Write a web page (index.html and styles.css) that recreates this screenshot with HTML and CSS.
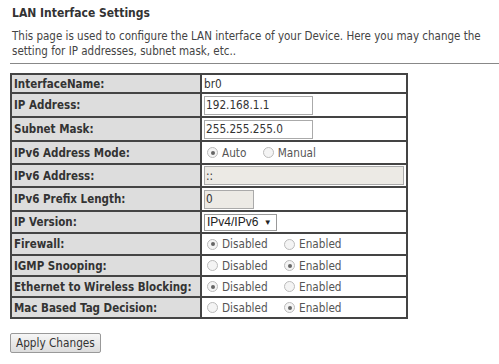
FILE: index.html
```html
<!DOCTYPE html>
<html lang="en">
<head>
    <meta charset="UTF-8">
    <title>LAN Interface Settings</title>
    <link rel="stylesheet" href="styles.css">
</head>
<body>

<div class="intro">
    <h2 class="page-title">LAN Interface Settings</h2>
    <p class="page-desc">This page is used to configure the LAN interface of your Device. Here you may change the setting for IP addresses, subnet mask, etc..</p>
    <hr>
</div>

<form>
<table class="settings">
    <tr class="r19">
        <th>InterfaceName:</th>
        <td>br0</td>
    </tr>
    <tr class="r24">
        <th>IP Address:</th>
        <td><input type="text" class="field" value="192.168.1.1"></td>
    </tr>
    <tr class="r24">
        <th>Subnet Mask:</th>
        <td><input type="text" class="field" value="255.255.255.0"></td>
    </tr>
    <tr>
        <th>IPv6 Address Mode:</th>
        <td class="radios">
            <label><span class="radio on"></span>Auto</label>
            <label><span class="radio"></span>Manual</label>
        </td>
    </tr>
    <tr>
        <th>IPv6 Address:</th>
        <td><input type="text" class="field wide" value="::" disabled></td>
    </tr>
    <tr class="r24">
        <th>IPv6 Prefix Length:</th>
        <td><input type="text" class="field short" value="0" disabled></td>
    </tr>
    <tr class="r22">
        <th>IP Version:</th>
        <td><span class="select">IPv4/IPv6 <span class="arrow">&#9660;</span></span></td>
    </tr>
    <tr class="r22">
        <th>Firewall:</th>
        <td class="radios">
            <label><span class="radio on"></span>Disabled</label>
            <label><span class="radio"></span>Enabled</label>
        </td>
    </tr>
    <tr class="r21">
        <th>IGMP Snooping:</th>
        <td class="radios">
            <label><span class="radio"></span>Disabled</label>
            <label><span class="radio on"></span>Enabled</label>
        </td>
    </tr>
    <tr class="r21">
        <th>Ethernet to Wireless Blocking:</th>
        <td class="radios">
            <label><span class="radio on"></span>Disabled</label>
            <label><span class="radio"></span>Enabled</label>
        </td>
    </tr>
    <tr class="r21">
        <th>Mac Based Tag Decision:</th>
        <td class="radios">
            <label><span class="radio"></span>Disabled</label>
            <label><span class="radio on"></span>Enabled</label>
        </td>
    </tr>
</table>

<button type="button" class="apply">Apply Changes</button>
</form>

</body>
</html>
```

FILE: styles.css
```css
body {
    margin: 0;
    padding: 5px 10px;
    background: #fff;
    color: #444;
    font-family: "DejaVu Sans", sans-serif;
    font-stretch: condensed;
    font-size: 11.7px;
}
.page-title {
    font-size: 12px;
    font-weight: bold;
    color: #333;
    margin: 1px 2px 9px;
}
.page-desc {
    margin: 0 2px;
    line-height: 15px;
    color: #444;
    font-size: 11.5px;
}
hr {
    border: none;
    border-top: 1px solid #888;
    margin: 4px -10px 0 0;
}
.settings {
    border-collapse: collapse;
    border: 2px solid #777;
    width: 398px;
    margin-top: 9px;
}
.settings th, .settings td {
    border: 2px solid #444;
    padding: 0 2px;
    text-align: left;
    height: 21px;
    white-space: nowrap;
}
.settings tr.r19 th, .settings tr.r19 td { height: 17px; }
.settings tr.r21 th, .settings tr.r21 td { height: 19px; }
.settings tr.r22 th, .settings tr.r22 td { height: 20px; }
.settings tr.r24 th, .settings tr.r24 td { height: 22px; }
.settings th {
    width: 185px;
    background: #ddd;
    color: #333;
    font-weight: bold;
    font-size: 11.5px;
}
.settings td {
    color: #333;
}
.field {
    font: inherit;
    color: #333;
    width: 105px;
    height: 15px;
    padding: 1px 1px;
    border: 1px solid #aaa;
    margin: 1px 0;
    vertical-align: middle;
}
.field.wide {
    width: 196px;
    background: #eceae5;
}
.field.short {
    width: 46px;
    background: #eceae5;
}
.select {
    display: inline-block;
    border: 1px solid #999;
    padding: 0 4px 0 2px;
    font-family: "Liberation Sans", sans-serif;
    font-stretch: normal;
    font-size: 12px;
    line-height: 15px;
    color: #222;
    vertical-align: middle;
}
.arrow {
    font-size: 8px;
    margin-left: 2px;
    vertical-align: 1px;
}
.radios label {
    display: inline-flex;
    align-items: center;
    vertical-align: middle;
    margin: 0 10px 0 3px;
    color: #555;
}
.radio {
    width: 9px;
    height: 9px;
    border: 1px solid #bbb;
    border-radius: 50%;
    background: #f4f4f4;
    margin-right: 4px;
    display: inline-flex;
    align-items: center;
    justify-content: center;
}
.radio.on::after {
    content: "";
    width: 4px;
    height: 4px;
    border-radius: 50%;
    background: #666;
}
.apply {
    margin-top: 14px;
    font: inherit;
    font-size: 11.7px;
    color: #333;
    background: linear-gradient(#f6f6f6, #dcdcdc);
    border: 1px solid #999;
    border-radius: 2px;
    padding: 2px 5px;
}
```
